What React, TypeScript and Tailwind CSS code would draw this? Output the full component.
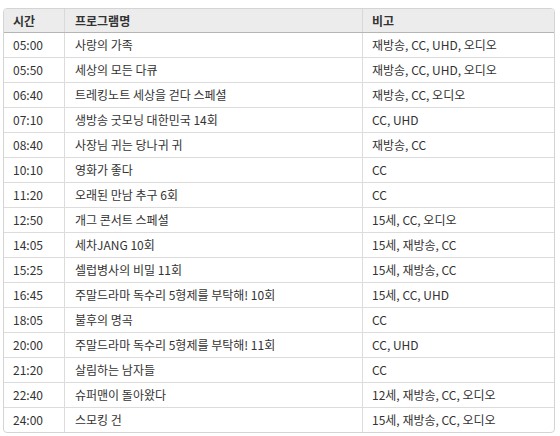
import React from "react";

const rows: [string, string, string][] = [
  ["05:00", "사랑의 가족", "재방송, CC, UHD, 오디오"],
  ["05:50", "세상의 모든 다큐", "재방송, CC, UHD, 오디오"],
  ["06:40", "트레킹노트 세상을 걷다 스페셜", "재방송, CC, 오디오"],
  ["07:10", "생방송 굿모닝 대한민국 14회", "CC, UHD"],
  ["08:40", "사장님 귀는 당나귀 귀", "재방송, CC"],
  ["10:10", "영화가 좋다", "CC"],
  ["11:20", "오래된 만남 추구 6회", "CC"],
  ["12:50", "개그 콘서트 스페셜", "15세, CC, 오디오"],
  ["14:05", "세차JANG 10회", "15세, 재방송, CC"],
  ["15:25", "셀럽병사의 비밀 11회", "15세, 재방송, CC"],
  ["16:45", "주말드라마 독수리 5형제를 부탁해! 10회", "15세, CC, UHD"],
  ["18:05", "불후의 명곡", "CC"],
  ["20:00", "주말드라마 독수리 5형제를 부탁해! 11회", "CC, UHD"],
  ["21:20", "살림하는 남자들", "CC"],
  ["22:40", "슈퍼맨이 돌아왔다", "12세, 재방송, CC, 오디오"],
  ["24:00", "스모킹 건", "15세, 재방송, CC, 오디오"],
];

export default function App() {
  return (
    <div
      className="w-[560px] h-[436px] bg-white pt-[8px] pl-[3px] text-[12px] text-[#333333]"
      style={{ fontFamily: '"Noto Sans CJK KR", "Noto Sans", sans-serif' }}
    >
      <div className="w-[552px] border border-[#d4d4d4] rounded-[4px] overflow-hidden">
        <div className="flex h-[24px] border-b border-[#b5b5b5] bg-[#ececec] bg-[radial-gradient(#dcdcdc_0.6px,transparent_0.6px)] bg-[length:4px_4px] font-bold">
          <div className="w-[61px] shrink-0 border-r border-[#d9d9d9] pl-[9px] flex items-center">시간</div>
          <div className="w-[298px] shrink-0 border-r border-[#d9d9d9] pl-[10px] flex items-center">프로그램명</div>
          <div className="flex-1 pl-[9px] flex items-center">비고</div>
        </div>
        {rows.map((r, i) => (
          <div
            key={i}
            className={
              i < rows.length - 1
                ? "flex h-[25px] border-b border-[#dcdcdc]"
                : "flex h-[24px]"
            }
          >
            <div className="w-[61px] shrink-0 border-r border-[#dcdcdc] pl-[9px] flex items-center">{r[0]}</div>
            <div className="w-[298px] shrink-0 border-r border-[#dcdcdc] pl-[10px] flex items-center">{r[1]}</div>
            <div className="flex-1 pl-[9px] flex items-center">{r[2]}</div>
          </div>
        ))}
      </div>
    </div>
  );
}
